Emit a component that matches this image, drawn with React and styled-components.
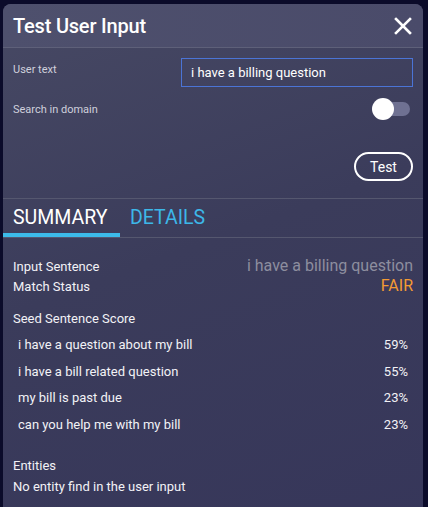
import React, { useState } from 'react';
import styled, { createGlobalStyle } from 'styled-components';

const GlobalStyle = createGlobalStyle`
  html, body {
    margin: 0;
    padding: 0;
    background: #0b0b2a;
    font-family: Roboto, "Noto Sans", "Liberation Sans", sans-serif;
    overflow: hidden;
  }
`;

const Page = styled.div`
  width: 428px;
  height: 507px;
  padding: 4px 5px 0 3px;
  box-sizing: border-box;
  overflow: hidden;
`;

const Modal = styled.div`
  height: 540px;
  border-radius: 8px 8px 0 0;
  background: linear-gradient(160deg, #474964 0%, #3b3c5b 45%, #36365a 100%);
  color: #fff;
`;

const Header = styled.div`
  display: flex;
  align-items: center;
  justify-content: space-between;
  height: 43px;
  padding: 0 10px 0 10px;
  background: linear-gradient(90deg, #4e506d 0%, #4a4b6a 100%);
  border-radius: 8px 8px 0 0;
  border-bottom: 1px solid #5e6079;
`;

const Title = styled.h1`
  margin: 0;
  font-size: 20px;
  font-weight: 500;
  letter-spacing: -0.2px;
  color: #fff;
`;

const CloseButton = styled.button`
  border: none;
  background: none;
  padding: 0;
  width: 20px;
  height: 20px;
  display: flex;
  align-items: center;
  justify-content: center;
  cursor: pointer;
`;

const Form = styled.div`
  padding: 10px 10px 0 10px;
  display: flex;
  flex-direction: column;
`;

const FieldRow = styled.div`
  display: flex;
  align-items: ${p => p.align || 'center'};
  justify-content: space-between;
  height: ${p => p.h}px;
`;

const Label = styled.span`
  font-size: 11px;
  color: #cfd0dc;
  padding-top: ${p => p.pt || 0}px;
`;

const TextInput = styled.input`
  width: 232px;
  height: 29px;
  box-sizing: border-box;
  background: transparent;
  border: 1px solid #4b74d6;
  color: #fff;
  font-family: inherit;
  font-size: 13px;
  padding: 0 9px;
  outline: none;
`;

const Toggle = styled.button`
  position: relative;
  width: 38px;
  height: 24px;
  margin-right: 3px;
  border: none;
  background: none;
  padding: 0;
  cursor: pointer;
  &::before {
    content: '';
    position: absolute;
    left: 4px;
    right: 0;
    top: 5px;
    height: 14px;
    border-radius: 7px;
    background: #6f7192;
  }
  &::after {
    content: '';
    position: absolute;
    left: ${p => (p.on ? '16px' : '0')};
    top: 1px;
    width: 22px;
    height: 22px;
    border-radius: 50%;
    background: #fff;
  }
`;

const ButtonRow = styled.div`
  display: flex;
  justify-content: flex-end;
  padding: 25px 0 17px;
`;

const TestButton = styled.button`
  width: 59px;
  height: 29px;
  border: 2px solid #fff;
  border-radius: 15px;
  background: transparent;
  color: #fff;
  font-family: inherit;
  font-size: 14px;
  cursor: pointer;
`;

const Tabs = styled.div`
  display: flex;
  border-top: 1px solid #55576f;
  border-bottom: 1px solid #55576f;
  height: 38px;
`;

const Tab = styled.button`
  border: none;
  background: none;
  padding: 0 10px;
  height: 100%;
  box-sizing: border-box;
  font-family: inherit;
  font-size: 19.5px;
  color: ${p => (p.active ? '#ffffff' : '#3db7e8')};
  border-bottom: 4px solid ${p => (p.active ? '#3cbbea' : 'transparent')};
  padding-top: 3px;
  cursor: pointer;
  &:first-child {
    width: 117px;
    text-align: left;
  }
`;

const Content = styled.div`
  padding: 18px 10px 0 10px;
  display: flex;
  flex-direction: column;
`;

const SummaryRow = styled.div`
  display: flex;
  justify-content: space-between;
  align-items: baseline;
  height: 20px;
`;

const Key = styled.span`
  font-size: 13px;
  color: #f2f2f6;
`;

const Value = styled.span`
  font-size: 16px;
  color: ${p => p.color};
`;

const SectionTitle = styled.div`
  font-size: 13px;
  color: #f2f2f6;
  margin-top: ${p => p.mt}px;
  height: 20px;
`;

const ScoreList = styled.div`
  display: flex;
  flex-direction: column;
`;

const ScoreRow = styled.div`
  display: flex;
  justify-content: space-between;
  align-items: center;
  height: 26.7px;
  padding: 0 5px 0 5px;
  font-size: 13px;
  color: #f2f2f6;
`;

const Note = styled.div`
  font-size: 13px;
  color: #f2f2f6;
  margin-top: 1px;
`;

const scores = [
  { text: 'i have a question about my bill', pct: 59 },
  { text: 'i have a bill related question', pct: 55 },
  { text: 'my bill is past due', pct: 23 },
  { text: 'can you help me with my bill', pct: 23 },
];

export default function App() {
  const [text, setText] = useState('i have a billing question');
  const [inDomain, setInDomain] = useState(false);
  const [tab, setTab] = useState('summary');

  return (
    <>
      <GlobalStyle />
      <Page>
        <Modal>
          <Header>
            <Title>Test User Input</Title>
            <CloseButton aria-label="close">
              <svg width="18" height="18" viewBox="0 0 18 18">
                <path d="M2 2 L16 16 M16 2 L2 16" stroke="#fff" strokeWidth="2.6" strokeLinecap="square" />
              </svg>
            </CloseButton>
          </Header>
          <Form>
            <FieldRow h={33} align="flex-start">
              <Label pt={5}>User text</Label>
              <TextInput value={text} onChange={e => setText(e.target.value)} />
            </FieldRow>
            <FieldRow h={36}>
              <Label>Search in domain</Label>
              <Toggle on={inDomain} onClick={() => setInDomain(!inDomain)} aria-label="search in domain" />
            </FieldRow>
            <ButtonRow>
              <TestButton>Test</TestButton>
            </ButtonRow>
          </Form>
          <Tabs>
            <Tab active={tab === 'summary'} onClick={() => setTab('summary')}>SUMMARY</Tab>
            <Tab active={tab === 'details'} onClick={() => setTab('details')}>DETAILS</Tab>
          </Tabs>
          <Content>
            <SummaryRow>
              <Key>Input Sentence</Key>
              <Value color="#8d8e9f">{text}</Value>
            </SummaryRow>
            <SummaryRow>
              <Key>Match Status</Key>
              <Value color="#f39a33">FAIR</Value>
            </SummaryRow>
            <SectionTitle mt={15}>Seed Sentence Score</SectionTitle>
            <ScoreList>
              {scores.map(s => (
                <ScoreRow key={s.text}>
                  <span>{s.text}</span>
                  <span>{s.pct}%</span>
                </ScoreRow>
              ))}
            </ScoreList>
            <SectionTitle mt={20}>Entities</SectionTitle>
            <Note>No entity find in the user input</Note>
          </Content>
        </Modal>
      </Page>
    </>
  );
}
